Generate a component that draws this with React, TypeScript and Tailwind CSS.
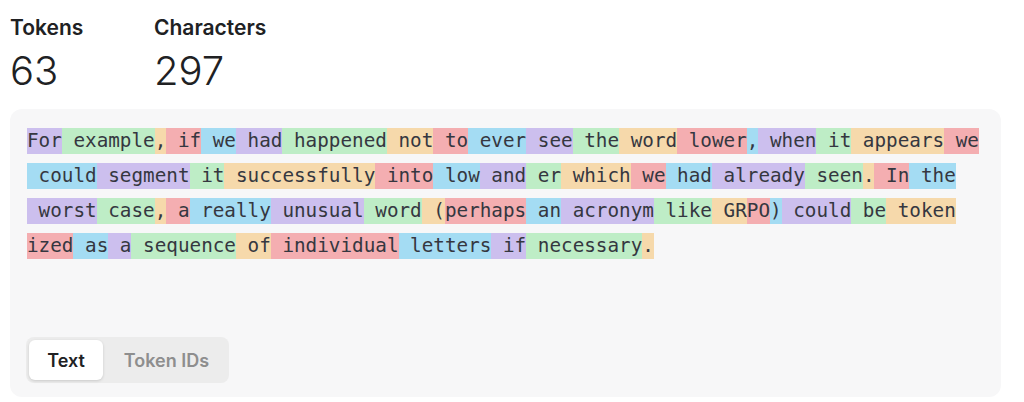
import { useState } from "react";

// colour cycle used by the tokenizer view
const palette = [
  "bg-[rgba(107,64,216,0.3)]",
  "bg-[rgba(104,222,122,0.4)]",
  "bg-[rgba(244,172,54,0.4)]",
  "bg-[rgba(239,65,70,0.4)]",
  "bg-[rgba(39,181,234,0.4)]",
];

const tokens = [
  "For", " example", ",", " if", " we", " had", " happened", " not", " to", " ever",
  " see", " the", " word", " lower", ",", " when", " it", " appears", " we",
  " could", " segment", " it", " successfully", " into", " low", " and", " er",
  " which", " we", " had", " already", " seen", ".", " In", " the",
  " worst", " case", ",", " a", " really", " unusual", " word", " (", "perhaps",
  " an", " acronym", " like", " GR", "PO", ")", " could", " be", " token",
  "ized", " as", " a", " sequence", " of", " individual", " letters", " if",
  " necessary", ".",
];

const Stat = ({ label, value }: { label: string; value: string }) => (
  <div className="w-36 flex flex-col">
    <div className="text-[21px] font-semibold leading-[26px] text-[#202123]">{label}</div>
    <div className="text-[40px] font-light leading-[46px] text-[#202123] mt-[7px]">{value}</div>
  </div>
);

const App = () => {
  const [tab, setTab] = useState<"text" | "ids">("text");

  return (
    <div className="w-[1024px] h-[402px] bg-white font-['Inter',sans-serif] overflow-hidden">
      <div className="flex pl-[10px] pt-[15px]">
        <Stat label="Tokens" value="63" />
        <Stat label="Characters" value="297" />
      </div>

      <div className="mx-[10px] mt-[15px] w-[991px] h-[288px] rounded-xl bg-[#f7f7f8] flex flex-col pl-4 pt-[19px] pb-[14px]">
        <div className="ml-px w-[958px] flex flex-wrap gap-y-[9px] font-['DejaVu_Sans_Mono',monospace] text-[19.3px] text-[#353740]">
          {tab === "text"
            ? tokens.map((t, i) => (
                <span
                  key={i}
                  className={`whitespace-pre leading-[26px] h-[26px] ${palette[i % 5]}`}
                >
                  {t}
                </span>
              ))
            : null}
        </div>

        <div className="mt-auto flex w-[203px] h-[46px] rounded-lg bg-[#ececec] p-[3px] gap-1">
          <button
            onClick={() => setTab("text")}
            className={`w-[74px] rounded-md text-[18px] font-semibold ${
              tab === "text" ? "bg-white text-[#202123] shadow-[0_1px_3px_rgba(0,0,0,0.15)]" : "text-[#8e8e8e]"
            }`}
          >
            Text
          </button>
          <button
            onClick={() => setTab("ids")}
            className={`flex-1 rounded-md text-[18px] font-semibold ${
              tab === "ids" ? "bg-white text-[#202123] shadow-[0_1px_3px_rgba(0,0,0,0.15)]" : "text-[#8e8e8e]"
            }`}
          >
            Token IDs
          </button>
        </div>
      </div>
    </div>
  );
};

export default App;
